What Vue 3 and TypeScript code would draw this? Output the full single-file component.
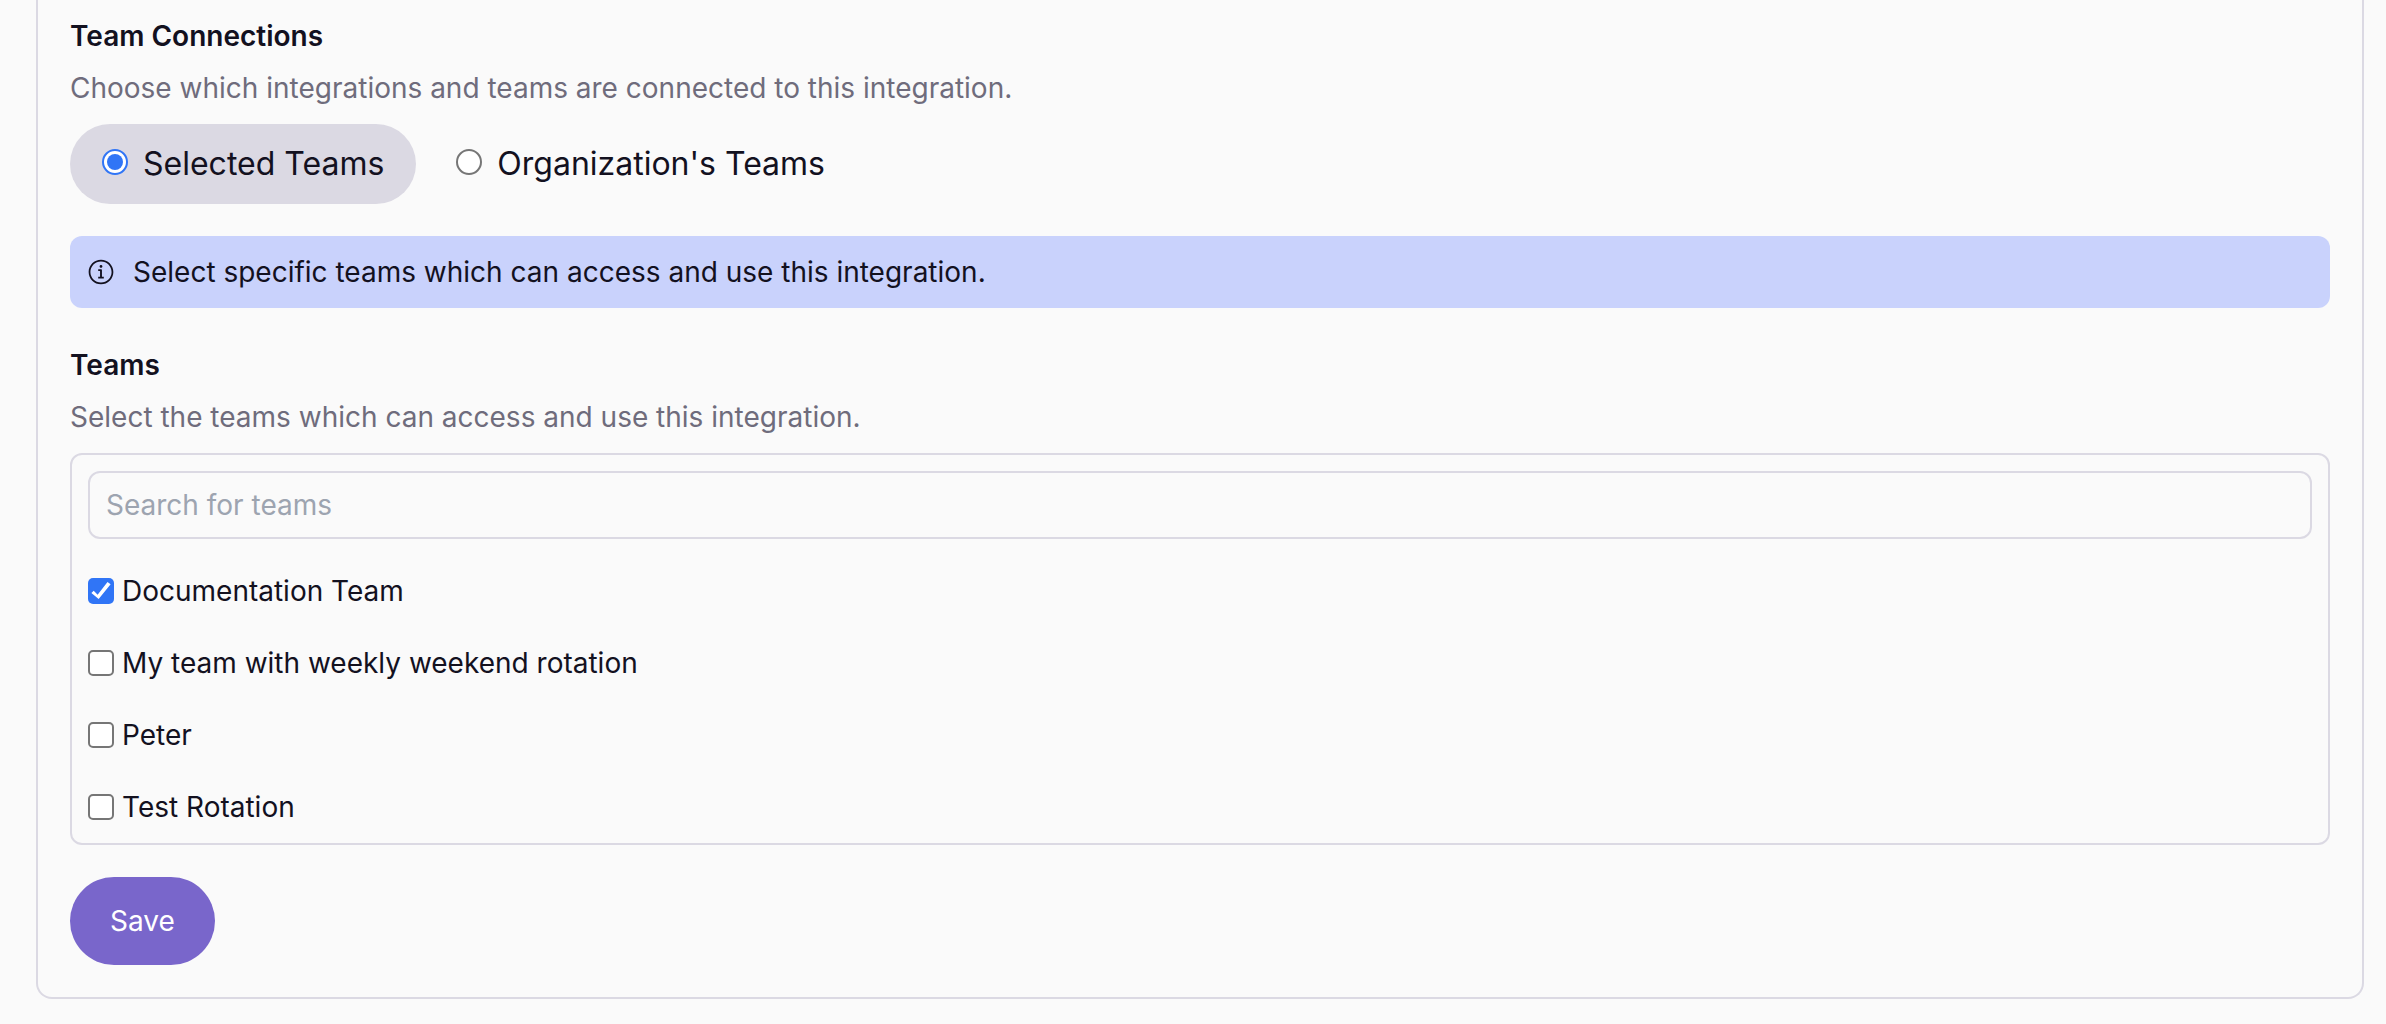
<script setup lang="ts">
import { computed, ref } from 'vue'

interface Team {
  id: string
  name: string
}

type Scope = 'selected' | 'organization'

const scopes: { value: Scope; label: string }[] = [
  { value: 'selected', label: 'Selected Teams' },
  { value: 'organization', label: "Organization's Teams" },
]

const teams: Team[] = [
  { id: 'documentation', name: 'Documentation Team' },
  { id: 'weekly', name: 'My team with weekly weekend rotation' },
  { id: 'peter', name: 'Peter' },
  { id: 'test', name: 'Test Rotation' },
]

const scope = ref<Scope>('selected')
const search = ref('')
const chosen = ref<string[]>(['documentation'])

const visibleTeams = computed(() =>
  teams.filter((team) => team.name.toLowerCase().includes(search.value.toLowerCase())),
)
</script>

<template>
  <main class="page">
    <form class="card" @submit.prevent>
      <section>
        <h2 class="title">Team Connections</h2>
        <p class="hint">Choose which integrations and teams are connected to this integration.</p>
        <div class="scopes" role="radiogroup" aria-label="Team Connections">
          <label
            v-for="option in scopes"
            :key="option.value"
            class="scope"
            :class="{ active: scope === option.value }"
          >
            <input v-model="scope" class="radio" type="radio" name="scope" :value="option.value" />
            <span>{{ option.label }}</span>
          </label>
        </div>
      </section>

      <div class="notice">
        <svg class="notice-icon" viewBox="0 0 15 15" aria-hidden="true">
          <path
            fill="currentColor"
            fill-rule="evenodd"
            clip-rule="evenodd"
            d="M7.49991 0.876892C3.84222 0.876892 0.877075 3.84204 0.877075 7.49972C0.877075 11.1574 3.84222 14.1226 7.49991 14.1226C11.1576 14.1226 14.1227 11.1574 14.1227 7.49972C14.1227 3.84204 11.1576 0.876892 7.49991 0.876892ZM1.82707 7.49972C1.82707 4.36671 4.36689 1.82689 7.49991 1.82689C10.6329 1.82689 13.1727 4.36671 13.1727 7.49972C13.1727 10.6327 10.6329 13.1726 7.49991 13.1726C4.36689 13.1726 1.82707 10.6327 1.82707 7.49972ZM8.24992 4.49999C8.24992 4.9142 7.91413 5.24999 7.49992 5.24999C7.08571 5.24999 6.74992 4.9142 6.74992 4.49999C6.74992 4.08577 7.08571 3.74999 7.49992 3.74999C7.91413 3.74999 8.24992 4.08577 8.24992 4.49999ZM6.00003 5.99999H6.50003H7.50003C7.77618 5.99999 8.00003 6.22384 8.00003 6.49999V9.99999H8.50003H9.00003V11H8.50003H7.50003H6.50003H6.00003V9.99999H6.50003H7.00003V6.99999H6.50003H6.00003V5.99999Z"
          />
        </svg>
        <p>Select specific teams which can access and use this integration.</p>
      </div>

      <section class="teams">
        <h2 class="title">Teams</h2>
        <p class="hint">Select the teams which can access and use this integration.</p>
        <div class="picker">
          <input
            v-model="search"
            class="search"
            type="text"
            placeholder="Search for teams"
            aria-label="Search for teams"
          />
          <label v-for="team in visibleTeams" :key="team.id" class="team">
            <input v-model="chosen" class="check" type="checkbox" :value="team.id" />
            <span>{{ team.name }}</span>
          </label>
        </div>
      </section>

      <button class="save" type="submit">Save</button>
    </form>
  </main>
</template>

<style>
body {
  background: #fafafa;
}
</style>

<style scoped>
.page {
  padding: 0 22px 24px 36px;
  color: #13111f;
  font-family: Inter, 'Liberation Sans', sans-serif;
  font-size: 28px;
  line-height: 40px;
}

.card {
  padding: 16px 32px 32px;
  border: 2px solid #dbd9e3;
  border-top: 0;
  border-radius: 0 0 16px 16px;
}

.title,
.hint,
.notice p {
  margin: 0;
}

.title {
  font-size: 28px;
  font-weight: 600;
}

.hint {
  margin: 12px 0 16px;
  color: #6f6c7c;
}

.scopes {
  display: flex;
  flex-wrap: wrap;
  gap: 8px;
}

.scope {
  display: flex;
  align-items: center;
  gap: 15px;
  padding: 16px 32px;
  border-radius: 40px;
  font-size: 32px;
  line-height: 48px;
}

.scope.active {
  background: #dbd9e3;
}

.radio,
.check {
  appearance: none;
  box-sizing: border-box;
  flex: none;
  width: 26px;
  height: 26px;
  margin: 0;
  border: 2px solid #767676;
  background: #fff;
}

.radio {
  display: grid;
  place-items: center;
  margin-bottom: 4px;
  border-radius: 50%;
}

.radio:checked {
  border-color: #3075f6;
}

.radio:checked::before {
  width: 16px;
  height: 16px;
  border-radius: 50%;
  background: #3075f6;
  content: '';
}

.notice {
  display: flex;
  align-items: center;
  gap: 18px;
  margin-top: 32px;
  padding: 16px 17px;
  border-radius: 12px;
  background: #c9d2fc;
}

.notice-icon {
  flex: none;
  width: 28px;
  height: 28px;
}

.teams {
  margin-top: 37px;
}

.picker {
  display: flex;
  flex-direction: column;
  align-items: flex-start;
  gap: 32px;
  padding: 16px;
  border: 2px solid #dbd9e3;
  border-radius: 12px;
}

.search {
  box-sizing: border-box;
  width: 100%;
  height: 68px;
  padding: 0 16px;
  border: 2px solid #dbd9e3;
  border-radius: 12px;
  background: transparent;
  color: inherit;
  font: inherit;
}

.search::placeholder {
  color: #9da4b0;
  opacity: 1;
}

.team {
  display: flex;
  align-items: center;
  gap: 8px;
}

.check {
  border-radius: 5px;
}

.check:checked {
  border: 0;
  background: #3075f6;
}

.check:checked::before {
  display: block;
  width: 100%;
  height: 100%;
  background: #fff;
  clip-path: polygon(13% 58%, 22% 49%, 37% 64%, 75% 15%, 87% 24%, 41% 81%);
  content: '';
}

.save {
  display: block;
  margin-top: 32px;
  padding: 24px 40px;
  border: 0;
  border-radius: 44px;
  background: #7966cb;
  color: #fff;
  font: inherit;
}
</style>
